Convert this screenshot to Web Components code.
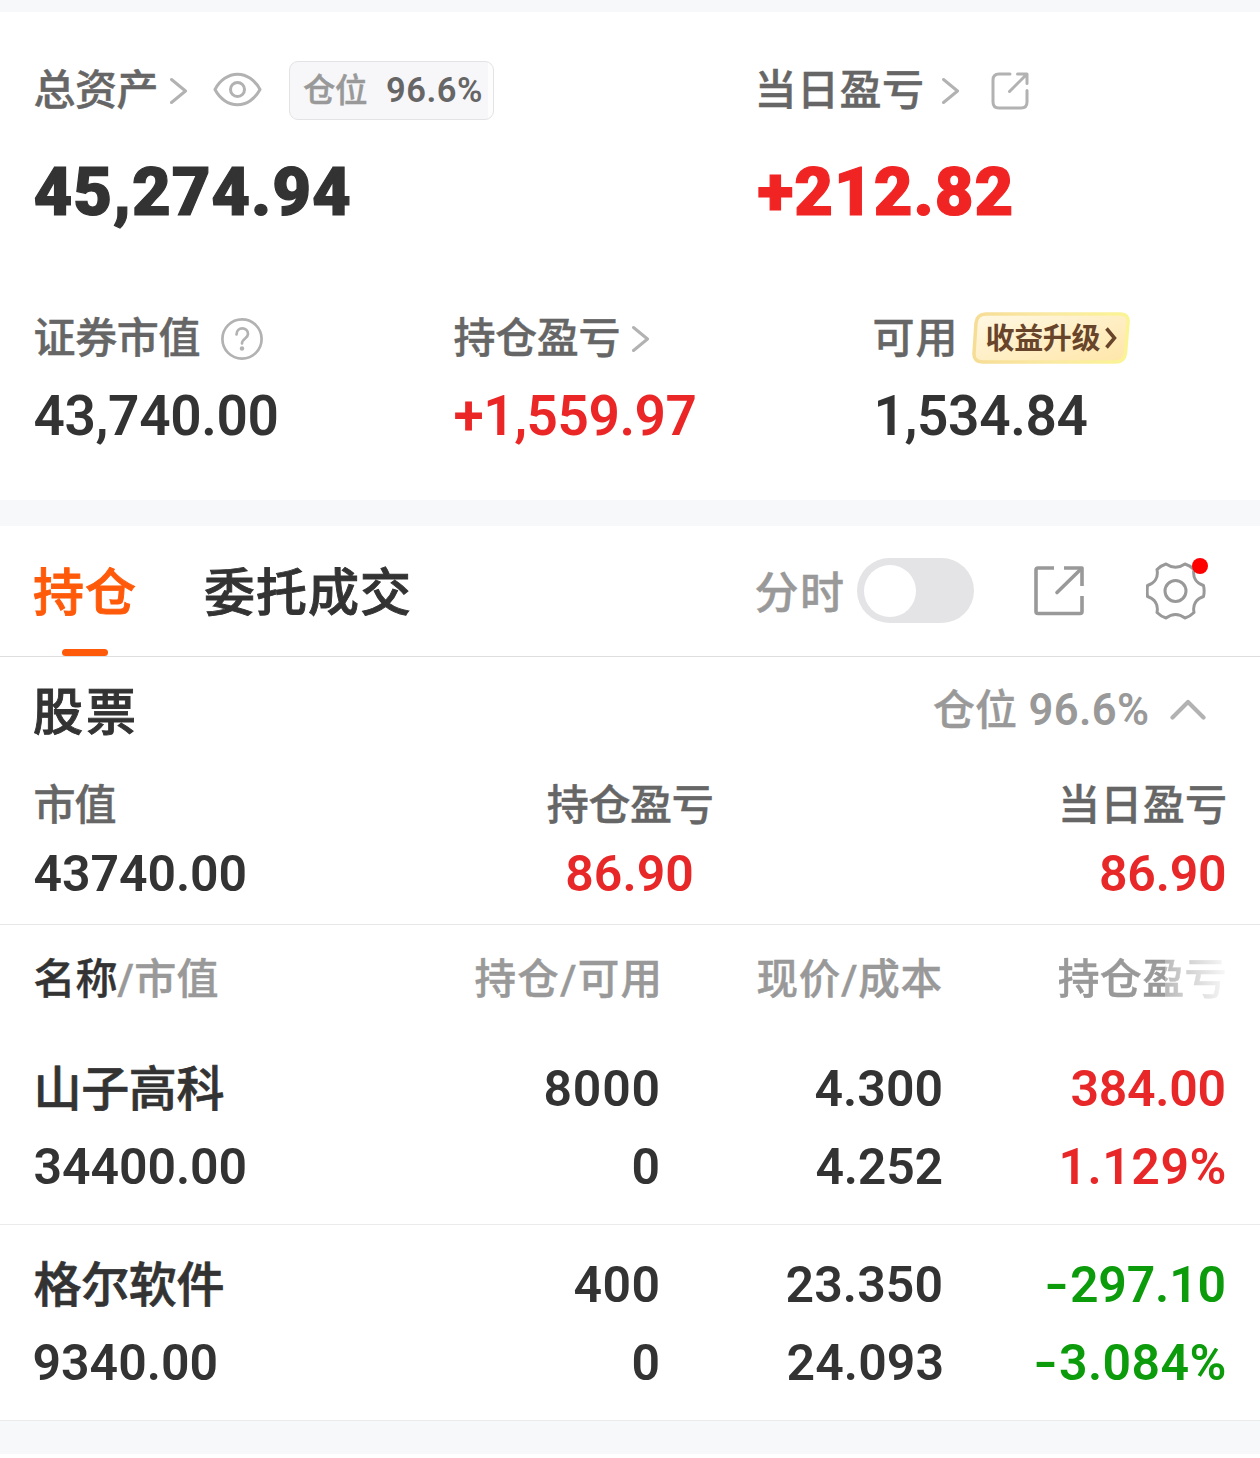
<!DOCTYPE html>
<html lang="zh-CN">
<head>
<meta charset="utf-8">
<title>持仓</title>
<style>
  html, body { margin: 0; background: #fff; }
  body { width: 1260px; height: 1458px; overflow: hidden; font-family: Roboto, "Noto Sans CJK SC", sans-serif; }
</style>
</head>
<body>
<portfolio-page></portfolio-page>
<script>
const FAMILY = 'Roboto, "Noto Sans CJK SC", sans-serif';
const ctx = document.createElement('canvas').getContext('2d');
const SIGN = 23.5;

/* Single line of text whose glyphs are tracked to fill a given width. */
class FitText extends HTMLElement {
  connectedCallback() {
    if (this.shadowRoot) return;
    const size = +this.getAttribute('size') || 42;
    const weight = this.getAttribute('weight') || 500;
    const w = +this.getAttribute('w');
    let text = this.textContent.trim();
    const cjk = /[\u4e00-\u9fff]/.test(text);
    const stroke = this.getAttribute('stroke') || (cjk ? .45 : 0);
    /* A leading minus sits in a wide box of its own. */
    const signed = text[0] === '-';
    if (signed) {
      text = text.slice(1);
      this.innerHTML = `<b>-</b>${text}`;
    }
    ctx.font = `${weight} ${size}px ${FAMILY}`;
    ctx.fontKerning = 'none';
    const m = ctx.measureText(text);
    const ink = m.actualBoundingBoxLeft + m.actualBoundingBoxRight;
    const n = [...text].length;
    const ls = n > 1 ? (w - (signed ? SIGN : 0) - ink) / (n - 1) : 0;
    this.attachShadow({ mode: 'open' }).innerHTML = `<style>
      :host { display: block; flex: none; width: ${w}px; height: ${size}px; white-space: nowrap; color: ${this.getAttribute('color') || 'inherit'}; }
      span { display: block; font: ${weight} ${size}px/${size}px ${FAMILY}; font-kerning: none; letter-spacing: ${ls.toFixed(3)}px;
        margin-left: ${m.actualBoundingBoxLeft.toFixed(2)}px; padding-top: ${(size * (cjk ? 0.04 : 0.014)).toFixed(2)}px; -webkit-text-stroke: ${stroke}px currentColor; }
      ::slotted(b) { display: inline-block; width: ${SIGN}px; font-weight: inherit; letter-spacing: 0; transform: translateX(-2.5px) scaleX(1.32); transform-origin: 0 50%; }
    </style><span><slot></slot></span>`;
  }
}
customElements.define('fit-text', FitText);

const define = (name, html) => {
  const tpl = document.createElement('template');
  tpl.innerHTML = html;
  customElements.define(name, class extends HTMLElement {
    constructor() {
      super();
      this.attachShadow({ mode: 'open' }).appendChild(tpl.content.cloneNode(true));
    }
  });
};

const ICON = `<style>:host{display:block;flex:none}svg{display:block;fill:none;stroke:#b2b2b2;stroke-width:3;stroke-linecap:round;stroke-linejoin:round}</style>`;
define('icon-chevron', ICON + `<svg width="18" height="28"><path d="M1.500 2.500 15.500 14 1.500 25.500"/></svg>`);
define('icon-up', ICON + `<svg width="36" height="22" style="stroke-width:4.2"><path d="M2.5 18.500 18 3 33.500 18.500"/></svg>`);
define('icon-eye', ICON + `<svg width="50" height="36"><path d="M2 17.500C7 8 15.500 2.300 24.500 2.300S42 8 47 17.500C42 27 33.500 32.700 24.500 32.700S7 27 2 17.500Z"/><circle cx="24.500" cy="17.500" r="7"/></svg>`);
define('icon-share', ICON + `<svg width="38" height="38"><path d="M19 2H8Q2 2 2 8V30Q2 36 8 36H30Q36 36 36 30V18.500M26.500 2H36V11.500M35.500 2.500 18.500 19.500"/></svg>`);
define('icon-share-lg', ICON + `<svg width="50" height="50" style="stroke:#999;stroke-width:3.600;stroke-linecap:butt"><path d="M20 2H4Q2 2 2 4V45.500Q2 47.500 4 47.500H46Q48 47.500 48 45.500V30M30 2H48V20"/><path d="M47 3 23 26.500" stroke-linecap="round"/></svg>`);
define('icon-help', ICON + `<svg width="42" height="42" style="stroke-width:2.700"><circle cx="21" cy="21" r="19.600"/><path d="M15.500 16.500C15.500 8.500 27 8.500 27 16C27 20.500 21 20.500 21 25.500"/><circle cx="21" cy="30.500" r="2.200" fill="#b2b2b2" stroke="none"/></svg>`);
define('icon-gear', `<style>
  :host{display:grid;flex:none;width:62px;height:66px}
  svg,i{grid-area:1/1} svg{display:block;fill:none;stroke:#999;stroke-width:3;stroke-linejoin:round;align-self:start}
  i{width:16px;height:16px;border-radius:50%;background:#f00;justify-self:end}
</style>
<svg width="62" height="66" viewBox="0 0 62 66"><path d="M20 6Q29.500 12.500 39 6Q44 7.500 48 11.500C46.500 19 50 25 57.500 27.500Q58.800 33 57.500 38.500C50 41 46.500 47 48 54.500Q44 58.500 39 60Q29.500 53 20 60Q15 58.500 11 54.500C12.500 47 9 41 1.500 38.500Q.8 33 1.500 27.500C9 25 12.500 19 11 11.500Q15 7.500 20 6Z"/><circle cx="29.500" cy="33" r="10.500"/></svg><i></i>`);

define('toggle-switch', `<style>
  :host{display:flex;flex:none;box-sizing:border-box;width:117px;height:65px;border-radius:33px;background:#e4e4e6;padding:6.500px;align-items:center}
  i{width:52px;height:52px;border-radius:50%;background:#fff}
</style><i></i>`);

define('position-badge', `<style>
  :host{display:flex;flex:none;box-sizing:border-box;width:205px;height:59px;border:1px solid #e3e3e6;border-radius:9px;background:linear-gradient(90deg,#f7f7fa 198px,#fdfdfe 198px);align-items:center;padding-left:13px;gap:20px}
</style>
<fit-text size="32.500" w="64" color="#999">仓位</fit-text><fit-text size="34.500" w="94" weight="600" color="#666">96.6%</fit-text>`);

define('upgrade-tag', `<style>
  :host{display:grid;flex:none;width:158px;height:52px}
  svg,div{grid-area:1/1} svg{display:block}
  div{display:flex;align-items:center;padding-left:14.500px;gap:4px}
</style>
<svg width="158" height="52"><defs>
<linearGradient id="f" x2="1" y2="1"><stop stop-color="#fff8e4"/><stop offset="1" stop-color="#ffe6a8"/></linearGradient>
<linearGradient id="s" x2="1" y2="0"><stop stop-color="#f6dd96"/><stop offset=".5" stop-color="#fae9a4"/><stop offset="1" stop-color="#fbf495"/></linearGradient></defs>
<path d="M14 2H148Q157 2 156 11L153.500 41Q152.500 50 143 50H11Q1.500 50 2 41L4 11Q5 2 14 2Z" fill="url(#f)" stroke="url(#s)" stroke-width="3.500"/></svg>
<div><fit-text size="29" w="114" weight="700" stroke=".01" color="#68442a">收益升级</fit-text><svg width="13" height="24" fill="none" stroke="#68442a" stroke-width="3.500"><path d="M1.500 2.500 9.500 12 1.500 21.500"/></svg></div>`);

define('asset-summary', `<style>
  :host{display:block;height:488px;background:#fff;color:#333}
  .row{display:flex;align-items:center;padding-left:34.500px}
  .a{height:60px;padding-top:48px}
  .b{height:60px;padding-top:42px}
  .c{height:60px;padding-top:86px}
  .d{height:60px;padding-top:18px}
  .cell{display:flex;align-items:center;color:#666}
  .a .cell>fit-text,.c .cell>fit-text{margin-top:-1px}
  .half{width:724px}.third{width:420px}
</style>
<div class="row a">
  <div class="cell half"><fit-text w="122">总资产</fit-text><icon-chevron style="margin:1px 0 0 13.500px"></icon-chevron><icon-eye style="margin:-1px 0 0 24.500px"></icon-eye><position-badge style="margin-left:26.500px"></position-badge></div>
  <div class="cell"><fit-text w="163.500">当日盈亏</fit-text><icon-chevron style="margin:1px 0 0 20px"></icon-chevron><icon-share style="margin:1px 0 0 30.500px"></icon-share></div>
</div>
<div class="row b">
  <div class="half"><fit-text size="67" w="314.500" weight="900" stroke="1.2">45,274.94</fit-text></div>
  <fit-text size="67" w="253" weight="900" stroke="1.2" color="#f12424">+212.82</fit-text>
</div>
<div class="row c">
  <div class="cell third"><fit-text w="165">证券市值</fit-text><icon-help style="margin:1px 0 0 21px"></icon-help></div>
  <div class="cell third"><fit-text w="164">持仓盈亏</fit-text><icon-chevron style="margin:2px 0 0 13.500px"></icon-chevron></div>
  <div class="cell"><fit-text w="79">可用</fit-text><upgrade-tag style="margin-left:18.500px"></upgrade-tag></div>
</div>
<div class="row d">
  <div class="third"><fit-text size="55" w="242" weight="600">43,740.00</fit-text></div>
  <div class="third"><fit-text size="55" w="241" weight="600" color="#eb2626">+1,559.97</fit-text></div>
  <fit-text size="55" w="209" weight="600" style="margin-left:3px">1,534.84</fit-text>
</div>`);

define('holding-tabs', `<style>
  :host{display:flex;box-sizing:border-box;height:131px;border-bottom:1px solid #dedede;padding-left:34px;color:#333}
  .tab{display:flex;flex-direction:column;align-items:center;padding-top:40px}
  .tab i{width:46px;height:7px;border-radius:3.500px;background:#ff5a0a;margin-top:32px}
  .tools{display:flex;align-items:center;height:129px;margin-left:346.500px}
</style>
<div class="tab"><fit-text size="51" w="101" color="#ff5a0a" stroke=".9">持仓</fit-text><i></i></div>
<div class="tab" style="margin-left:70px"><fit-text size="51" w="204" stroke=".9">委托成交</fit-text></div>
<div class="tools"><fit-text size="44" w="87.500" color="#999" style="margin-top:3px">分时</fit-text><toggle-switch style="margin-left:14px"></toggle-switch><icon-share-lg style="margin-left:60px"></icon-share-lg><icon-gear style="margin:1px 0 0 62px"></icon-gear></div>`);

define('stock-summary', `<style>
  :host{display:block;box-sizing:border-box;height:268px;border-bottom:1px solid #e8e8e8;color:#333}
  .top{display:flex;align-items:center;height:60px;padding:23px 54px 0 34px}
  .pos{display:flex;align-items:center;margin-left:auto;color:#999}
  .grid{display:grid;grid-template-columns:repeat(3,1fr);align-items:center;padding:0 35px 0 34.500px;height:60px}
  .l{margin-top:34px;color:#666}.n{margin-top:9px}
  .grid>:nth-child(2){justify-self:center}.grid>:nth-child(3){justify-self:end}
</style>
<div class="top"><fit-text size="50" w="100" stroke=".9" style="margin-top:1px">股票</fit-text><div class="pos"><fit-text w="82" style="margin-top:-1px">仓位</fit-text><fit-text size="43.500" w="118.500" weight="600" style="margin-left:13.500px">96.6%</fit-text><icon-up style="margin-left:22px"></icon-up></div></div>
<div class="grid l"><fit-text w="81">市值</fit-text><fit-text w="164">持仓盈亏</fit-text><fit-text w="163">当日盈亏</fit-text></div>
<div class="grid n"><fit-text size="50" w="211" weight="600">43740.00</fit-text><fit-text size="50" w="125" weight="600" color="#e82828">86.90</fit-text><fit-text size="50" w="124" weight="600" color="#e82828">86.90</fit-text></div>`);

const GRID = `.g{display:grid;grid-template-columns:341px 283px 283px 283px;align-items:center;padding-left:34.500px;height:60px}.g>*{justify-self:end}.g>:first-child{justify-self:start}`;
define('holding-head', `<style>${GRID}
  :host{display:block;height:104px;color:#999}
  .g{padding-top:23px}
  .n{display:flex;color:#333}
  .fade{-webkit-mask:linear-gradient(90deg,#000 106px,rgba(0,0,0,.68) 106px,rgba(0,0,0,.08) 100%);mask:linear-gradient(90deg,#000 106px,rgba(0,0,0,.68) 106px,rgba(0,0,0,.08) 100%)}
</style>
<div class="g"><div class="n"><fit-text w="82">名称</fit-text><fit-text w="100" color="#999" style="margin-left:1px">/市值</fit-text></div><fit-text w="183" size="41.500">持仓/可用</fit-text><fit-text w="184" size="41.500">现价/成本</fit-text><fit-text class="fade" w="166">持仓盈亏</fit-text></div>`);

customElements.define('holding-row', class extends HTMLElement {
  connectedCallback() {
    if (this.shadowRoot) return;
    const color = this.getAttribute('color');
    const cells = this.getAttribute('cells').split(' ').map(c => c.split('|'));
    const cell = ([t, w], i) => i === 0
      ? `<fit-text size="48" w="${w}" stroke=".7" style="margin-left:${t[0] === '山' ? 3 : 0}px">${t}</fit-text>`
      : `<fit-text size="50" weight="600" w="${w}" color="${i % 4 === 3 ? color : '#333'}">${t}</fit-text>`;
    const html = cells.map(cell);
    this.attachShadow({ mode: 'open' }).innerHTML = `<style>${GRID}
      :host{display:block;box-sizing:border-box;height:196px;border-bottom:1px solid #ebebeb;color:#333}
      .g+.g{margin-top:18px}.g:first-of-type{padding-top:29px}</style>
      <div class="g">${html.slice(0, 4).join('')}</div><div class="g">${html.slice(4).join('')}</div>`;
  }
});

define('portfolio-page', `<style>
  :host{display:block;width:1260px}
  .band{background:#f7f8fa}
</style>
<div class="band" style="height:12px"></div>
<asset-summary></asset-summary>
<div class="band" style="height:26px"></div>
<holding-tabs></holding-tabs>
<stock-summary></stock-summary>
<holding-head></holding-head>
<holding-row color="#e82828" cells="山子高科|186 8000|113 4.300|126 384.00|153 34400.00|211 0|25 4.252|125 1.129%|162"></holding-row>
<holding-row color="#0b9b0b" cells="格尔软件|189 400|84 23.350|155 -297.10|177 9340.00|182 0|25 24.093|154 -3.084%|188"></holding-row>
<div class="band" style="height:33px"></div>`);
</script>
</body>
</html>
